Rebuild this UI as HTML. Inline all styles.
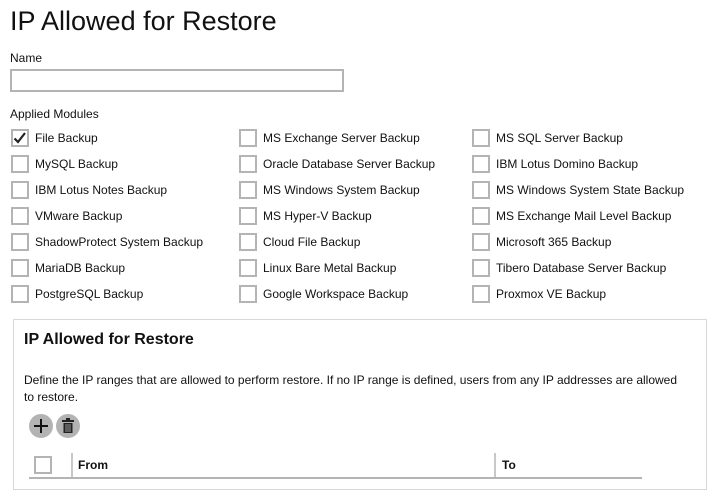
<!DOCTYPE html><html><head><style>
body{margin:0;width:720px;height:500px;background:#fff;font-family:"Liberation Sans",Arial,sans-serif;color:#111;position:relative;overflow:hidden}
.a{position:absolute;white-space:nowrap}
.cb{position:absolute;width:14px;height:14px;border:2px solid #b4b4b4;background:#fff}
.l{position:absolute;font-size:12px;white-space:nowrap}
</style></head><body>
<div class="a" style="left:10px;top:6px;font-size:27px">IP Allowed for Restore</div>
<div class="a" style="left:10px;top:51px;font-size:12px">Name</div>
<div class="a" style="left:10px;top:69px;width:330px;height:19px;border:2px solid #b4b4b4"></div>
<div class="a" style="left:10px;top:107px;font-size:12px">Applied Modules</div>
<div id="m"></div>
<div class="a" style="left:13px;top:319px;width:692px;height:169px;border:1px solid #d8d8d8"></div>
<div class="a" style="left:24px;top:331px;font-size:16px;font-weight:bold">IP Allowed for Restore</div>
<div class="a" style="left:24px;top:372px;font-size:12px;line-height:17px;white-space:normal;width:660px">Define the IP ranges that are allowed to perform restore. If no IP range is defined, users from any IP addresses are allowed to restore.</div>
<svg class="a" style="left:29px;top:414px" width="52" height="25"><circle cx="12" cy="12" r="12" fill="#b3b3b3"/><path d="M12 5v14M5 12h14" stroke="#111" stroke-width="2"/><circle cx="39" cy="12" r="12" fill="#b3b3b3"/><rect x="33" y="6" width="12" height="2" fill="#222"/><rect x="37" y="4" width="4" height="2" fill="#222"/><path d="M34.5 9v10h9V9" fill="#222"/><path d="M37 10v8M39 10v8M41 10v8" stroke="#b3b3b3" stroke-width="0.8"/></svg>
<div class="cb" style="left:34px;top:456px"></div>
<div class="a" style="left:71px;top:453px;width:2px;height:25px;background:#c8c8c8"></div>
<div class="a" style="left:494px;top:453px;width:2px;height:25px;background:#c8c8c8"></div>
<div class="a" style="left:78px;top:458px;font-size:12px;font-weight:bold">From</div>
<div class="a" style="left:502px;top:458px;font-size:12px;font-weight:bold">To</div>
<div class="a" style="left:29px;top:477px;width:613px;height:2px;background:#b4b4b4"></div>
<script>
var c=[["File Backup","MySQL Backup","IBM Lotus Notes Backup","VMware Backup","ShadowProtect System Backup","MariaDB Backup","PostgreSQL Backup"],["MS Exchange Server Backup","Oracle Database Server Backup","MS Windows System Backup","MS Hyper-V Backup","Cloud File Backup","Linux Bare Metal Backup","Google Workspace Backup"],["MS SQL Server Backup","IBM Lotus Domino Backup","MS Windows System State Backup","MS Exchange Mail Level Backup","Microsoft 365 Backup","Tibero Database Server Backup","Proxmox VE Backup"]];
var xs=[11,239,472],h="";
c.forEach(function(col,i){col.forEach(function(t,j){var y=129+26*j;h+='<div class="cb" style="left:'+xs[i]+'px;top:'+y+'px"></div><div class="l" style="left:'+(xs[i]+24)+'px;top:'+(y+2)+'px">'+t+'</div>';});});
h+='<svg class="a" style="left:13px;top:131px" width="14" height="14"><path d="M1.5 7.5l3.5 3.5 7-9" stroke="#222" stroke-width="2.2" fill="none"/></svg>';
document.getElementById("m").innerHTML=h;
</script>
</body></html>
